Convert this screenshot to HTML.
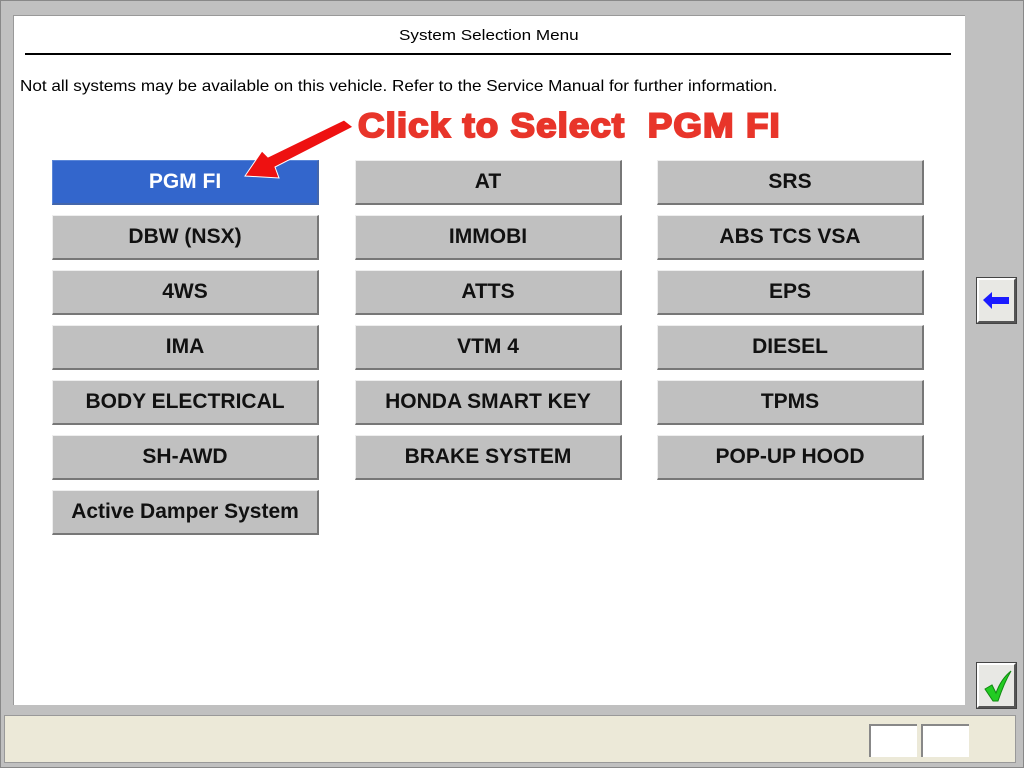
<!DOCTYPE html>
<html><head><meta charset="utf-8"><style>
*{margin:0;padding:0;box-sizing:border-box}
body{width:1024px;height:768px;background:#c0c0c0;position:relative;overflow:hidden;font-family:"Liberation Sans",sans-serif}
#outer{position:absolute;left:0;top:0;width:1024px;height:768px;border:1px solid #888}
#panel{position:absolute;left:13px;top:15px;width:952px;height:690px;background:#fff;border-left:1px solid #999;border-top:1px solid #999}
.t{position:absolute;white-space:nowrap}
.b{position:absolute;width:267px;height:45px;background:#c0c0c0;border-top:1px solid #eee;border-left:1px solid #eee;border-right:2px solid #777;border-bottom:2px solid #777;font-weight:bold;font-size:21px;text-align:center;line-height:42px;color:#111}
.blue{background:#3366cc;color:#fff;border-color:#5a86d8 #4466aa #4466aa #5a86d8}
#status{position:absolute;left:4px;top:715px;width:1012px;height:48px;background:#ece9d8;border:1px solid #999}
.sb{position:absolute;top:8px;width:48px;height:33px;background:#fff;border-top:2px solid #888;border-left:2px solid #888}
.ib{position:absolute;width:39px;height:45px;background:#e8e8e4;border:2px solid #555;border-top-color:#fff;border-left-color:#fff;box-shadow:0 0 0 1px #444}
</style></head><body>
<div id="outer"></div>
<div id="panel"></div>
<div class="t" style="left:399px;top:27px;font-size:15px;transform:scaleX(1.14);transform-origin:left">System Selection Menu</div>
<div style="position:absolute;left:25px;top:53px;width:926px;height:2px;background:#000"></div>
<div class="t" style="left:20px;top:78px;font-size:16px;transform:scaleX(1.07);transform-origin:left">Not all systems may be available on this vehicle. Refer to the Service Manual for further information.</div>
<div class="t" style="left:358px;top:107px;font-size:34px;font-weight:bold;color:#e8352a;-webkit-text-stroke:2px #e8352a;letter-spacing:1px;transform:scaleX(1.08);transform-origin:left">Click to Select&nbsp; PGM FI</div>

<div class="b blue" style="left:52px;top:160px">PGM FI</div>
<div class="b" style="left:355px;top:160px">AT</div>
<div class="b" style="left:657px;top:160px">SRS</div>
<div class="b" style="left:52px;top:215px">DBW (NSX)</div>
<div class="b" style="left:355px;top:215px">IMMOBI</div>
<div class="b" style="left:657px;top:215px">ABS TCS VSA</div>
<div class="b" style="left:52px;top:270px">4WS</div>
<div class="b" style="left:355px;top:270px">ATTS</div>
<div class="b" style="left:657px;top:270px">EPS</div>
<div class="b" style="left:52px;top:325px">IMA</div>
<div class="b" style="left:355px;top:325px">VTM 4</div>
<div class="b" style="left:657px;top:325px">DIESEL</div>
<div class="b" style="left:52px;top:380px">BODY ELECTRICAL</div>
<div class="b" style="left:355px;top:380px">HONDA SMART KEY</div>
<div class="b" style="left:657px;top:380px">TPMS</div>
<div class="b" style="left:52px;top:435px">SH-AWD</div>
<div class="b" style="left:355px;top:435px">BRAKE SYSTEM</div>
<div class="b" style="left:657px;top:435px">POP-UP HOOD</div>
<div class="b" style="left:52px;top:490px">Active Damper System</div>

<svg style="position:absolute;left:0;top:0;z-index:5" width="1024" height="768"><polygon points="245,176 262,151 268,157 344,120 353,127 275,167 279,178" fill="#ee1111" stroke="#fff" stroke-width="1"/></svg>

<div class="ib" style="left:977px;top:278px"><svg width="35" height="41"><polygon points="4,20 13,12 13,17 30,17 30,24 13,24 13,29" fill="#1a1aff"/></svg></div>
<div class="ib" style="left:977px;top:663px"><svg width="35" height="41"><path d="M6,24 L13,20 L17,28 Q22,14 32,6 Q25,18 19,36 L14,36 Z" fill="#22cc22" stroke="#118811" stroke-width="1"/></svg></div>

<div id="status"><div class="sb" style="left:864px"></div><div class="sb" style="left:916px"></div></div>
</body></html>
